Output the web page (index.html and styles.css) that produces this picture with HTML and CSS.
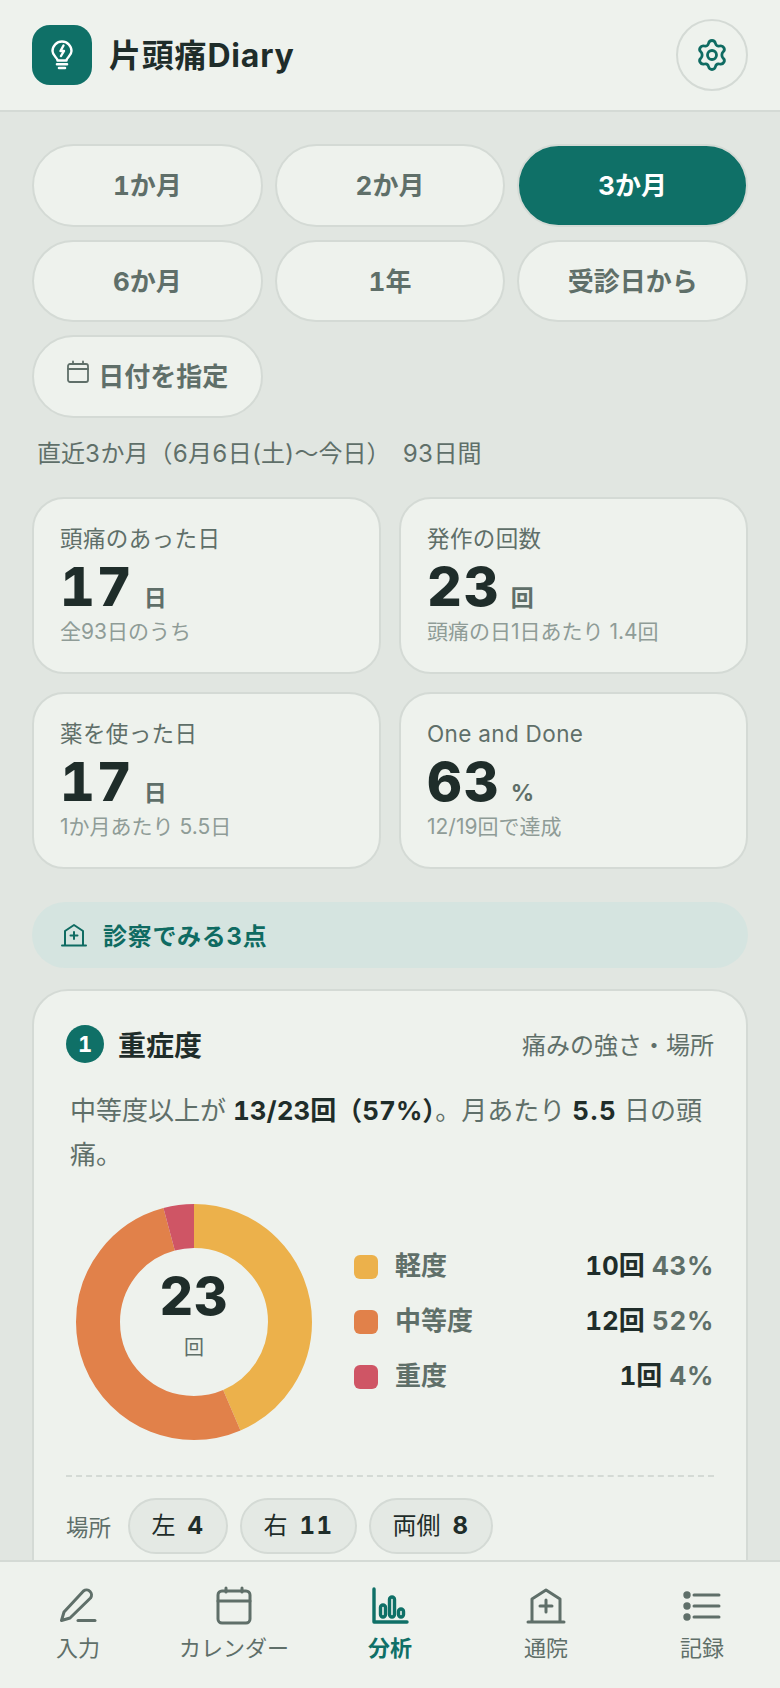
FILE: index.html
```html
<!DOCTYPE html>
<html lang="ja">
<head>
    <meta charset="UTF-8">
    <meta name="viewport" content="width=device-width, initial-scale=1.0">
    <title>片頭痛Diary</title>
    <link rel="stylesheet" href="styles.css">
</head>
<body>
    <!-- ヘッダー -->
    <header class="app-header">
        <div class="brand">
            <div class="brand-logo">
                <svg viewBox="0 0 32 32" width="32" height="32" fill="none" stroke="#fff" stroke-width="2.400" stroke-linecap="round" stroke-linejoin="round">
                    <path d="M11.500 21.500c0-3-5-4.500-5-9.500a9.500 9.500 0 0 1 19 0c0 5-5 6.500-5 9.500z"/>
                    <path d="M17.500 6.500l-3 5.500h3.500l-3 5"/>
                    <path d="M11 25.200h10M13 29h6" stroke-width="2.600"/>
                </svg>
            </div>
            <span class="brand-name">片頭痛Diary</span>
        </div>
        <button class="settings-btn" type="button" aria-label="設定">
            <svg viewBox="0 0 32 36" width="32" height="36" fill="none" stroke="#0f6b62" stroke-width="2.800" stroke-linecap="round" stroke-linejoin="round">
                <path d="M12.500 6.500C13.500 2.500 18.500 2.500 19.500 6.500C20 8.500 21.500 9.500 23.500 9C27.500 8 30 12.500 27 15C25.500 16.500 25.500 19.500 27 21C30 23.500 27.500 28 23.500 27C21.500 26.500 20 27.500 19.500 29.500C18.500 33.500 13.500 33.500 12.500 29.500C12 27.500 10.500 26.500 8.500 27C4.500 28 2 23.500 5 21C6.500 19.500 6.500 16.500 5 15C2 12.500 4.500 8 8.500 9C10.500 9.500 12 8.500 12.500 6.500Z"/>
                <circle cx="16" cy="18" r="4.500"/>
            </svg>
        </button>
    </header>

    <main class="content">
        <!-- 期間の切り替え -->
        <div class="range-grid">
            <button class="range-pill" type="button"><span>1か月</span></button>
            <button class="range-pill" type="button"><span>2か月</span></button>
            <button class="range-pill active" type="button"><span>3か月</span></button>
            <button class="range-pill" type="button"><span>6か月</span></button>
            <button class="range-pill" type="button"><span>1年</span></button>
            <button class="range-pill" type="button"><span>受診日から</span></button>
            <button class="range-pill with-icon" type="button">
                <svg viewBox="0 0 24 24" width="24" height="24" fill="none" stroke="#5f6f69" stroke-width="1.800" stroke-linecap="round" stroke-linejoin="round">
                    <rect x="2" y="4" width="20" height="18" rx="2"/>
                    <path d="M7 1.500V4M17 1.500V4M2 9h20"/>
                </svg>
                <span>日付を指定</span>
            </button>
        </div>
        <p class="range-note">直近3か月（6月6日(土)〜今日）　93日間</p>

        <!-- 集計カード -->
        <section class="stat-grid">
            <div class="stat-card">
                <div class="stat-label">頭痛のあった日</div>
                <div class="stat-value"><strong>17</strong><span>日</span></div>
                <div class="stat-sub">全93日のうち</div>
            </div>
            <div class="stat-card">
                <div class="stat-label">発作の回数</div>
                <div class="stat-value"><strong>23</strong><span>回</span></div>
                <div class="stat-sub">頭痛の日1日あたり 1.4回</div>
            </div>
            <div class="stat-card">
                <div class="stat-label">薬を使った日</div>
                <div class="stat-value"><strong>17</strong><span>日</span></div>
                <div class="stat-sub">1か月あたり 5.5日</div>
            </div>
            <div class="stat-card">
                <div class="stat-label">One and Done</div>
                <div class="stat-value"><strong>63</strong><span>%</span></div>
                <div class="stat-sub">12/19回で達成</div>
            </div>
        </section>

        <div class="visit-banner">
            <svg viewBox="0 0 26 24" width="26" height="24" fill="none" stroke="#0f6b62" stroke-width="2" stroke-linecap="round" stroke-linejoin="round">
                <path d="M4 22V8l9-6 9 6v14"/>
                <path d="M1 22.500h24"/>
                <path d="M13 9v7M9.500 12.500h7"/>
            </svg>
            <span>診察でみる3点</span>
        </div>

        <!-- 重症度カード -->
        <section class="detail-card">
            <div class="detail-head">
                <span class="step-badge">1</span>
                <h2>重症度</h2>
                <span class="detail-hint">痛みの強さ・場所</span>
            </div>
            <p class="detail-text">中等度以上が <b>13/23回（57%）</b>。月あたり <b class="rate">5.5</b> 日の頭<br>痛。</p>

            <div class="severity">
                <div class="donut">
                    <svg viewBox="0 0 236 236" width="236" height="236" fill="none" stroke-width="44">
                        <g transform="rotate(-90 118 118)">
                            <circle cx="118" cy="118" r="96" stroke="#ecb14b" stroke-dasharray="262.26 603.19"/>
                            <circle cx="118" cy="118" r="96" stroke="#e1814a" stroke-dasharray="314.71 603.19" stroke-dashoffset="-262.26"/>
                            <circle cx="118" cy="118" r="96" stroke="#cf5565" stroke-dasharray="26.22 603.19" stroke-dashoffset="-576.97"/>
                        </g>
                    </svg>
                    <div class="donut-center">
                        <strong>23</strong>
                        <span>回</span>
                    </div>
                </div>
                <ul class="legend">
                    <li><i class="swatch mild"></i><span class="legend-name">軽度</span><b>10回</b><span class="legend-pct">43%</span></li>
                    <li><i class="swatch medium"></i><span class="legend-name">中等度</span><b>12回</b><span class="legend-pct">52%</span></li>
                    <li><i class="swatch severe"></i><span class="legend-name">重度</span><b>1回</b><span class="legend-pct">4%</span></li>
                </ul>
            </div>

            <div class="place-row">
                <span class="place-label">場所</span>
                <span class="place-chip">左<b>4</b></span>
                <span class="place-chip">右<b>11</b></span>
                <span class="place-chip">両側<b>8</b></span>
            </div>
        </section>
    </main>

    <!-- 下部ナビ -->
    <nav class="tab-bar">
        <a class="tab" href="#">
            <svg viewBox="0 0 40 40" width="40" height="40" fill="none" stroke="currentColor" stroke-width="3" stroke-linecap="round" stroke-linejoin="round">
                <path d="M3.500 34.500L6 26L25.500 5a5 5 0 0 1 7 7L12 32z"/>
                <path d="M20 34.500h17"/>
            </svg>
            <span>入力</span>
        </a>
        <a class="tab" href="#">
            <svg viewBox="0 0 40 40" width="40" height="40" fill="none" stroke="currentColor" stroke-width="3" stroke-linecap="round" stroke-linejoin="round">
                <rect x="4" y="5" width="32" height="32" rx="4"/>
                <path d="M12 2v4M28 2v4M4 15h32"/>
            </svg>
            <span>カレンダー</span>
        </a>
        <a class="tab current" href="#">
            <svg viewBox="0 0 40 40" width="40" height="40" fill="none" stroke="currentColor" stroke-width="3.400" stroke-linecap="round" stroke-linejoin="round">
                <path d="M4 3v33h33"/>
                <rect x="10.500" y="19" width="5" height="12" rx="2.500"/>
                <rect x="19.500" y="11" width="5" height="20" rx="2.500"/>
                <rect x="28.500" y="23" width="5" height="8" rx="2.500"/>
            </svg>
            <span>分析</span>
        </a>
        <a class="tab" href="#">
            <svg viewBox="0 0 40 40" width="40" height="40" fill="none" stroke="currentColor" stroke-width="3" stroke-linecap="round" stroke-linejoin="round">
                <path d="M6 35V13L20 4l14 9v22"/>
                <path d="M2 36h36"/>
                <path d="M20 14v12M14 20h12"/>
            </svg>
            <span>通院</span>
        </a>
        <a class="tab" href="#">
            <svg viewBox="0 0 40 40" width="40" height="40" fill="none" stroke="currentColor" stroke-width="3" stroke-linecap="round">
                <path d="M12 9h25M12 20h25M12 31h25"/>
                <circle cx="5" cy="9" r="2.200" fill="currentColor"/>
                <circle cx="5" cy="20" r="2.200" fill="currentColor"/>
                <circle cx="5" cy="31" r="2.200" fill="currentColor"/>
            </svg>
            <span>記録</span>
        </a>
    </nav>
</body>
</html>
```

FILE: styles.css
```css
/* 全体 */
html, body {
    margin: 0;
    padding: 0;
    width: 780px;
    height: 1688px;
    overflow: hidden;
}

body {
    display: flex;
    flex-direction: column;
    background: #e1e6e1;
    color: #1f2d2a;
    font-family: Inter, "Noto Sans CJK JP", sans-serif;
    font-variant-numeric: tabular-nums;
}

button {
    font-family: inherit;
    font-variant-numeric: inherit;
    cursor: pointer;
}

/* ヘッダー */
.app-header {
    flex: none;
    height: 110px;
    display: flex;
    align-items: center;
    justify-content: space-between;
    padding: 0 32px;
    background: #eef2ed;
    border-bottom: 2px solid #d4dad5;
}

.brand {
    display: flex;
    align-items: center;
    gap: 17px;
}

.brand-logo {
    width: 60px;
    height: 60px;
    display: flex;
    align-items: center;
    justify-content: center;
    border-radius: 18px;
    background: #0f7067;
}

.brand-name {
    margin-bottom: 4px;
    font-size: 32px;
    font-weight: 700;
    letter-spacing: 0.8px;
}

.settings-btn {
    width: 72px;
    height: 72px;
    display: flex;
    align-items: center;
    justify-content: center;
    padding: 0;
    border: 2px solid #d4dad5;
    border-radius: 50%;
    background: #eef2ed;
}

/* メイン */
.content {
    flex: 1;
    min-height: 0;
    overflow: hidden;
    padding: 32px 32px 0;
}

/* 期間ボタン */
.range-grid {
    display: grid;
    grid-template-columns: repeat(3, 1fr);
    gap: 13px 12px;
}

.range-pill {
    height: 82.5px;
    padding: 0 0 3px;
    border: 2px solid #d4dad5;
    border-radius: 42px;
    background: #eef2ed;
    color: #5f6f69;
    font-size: 26px;
    font-weight: 700;
}

.range-pill.active {
    background: #0f7067;
    color: #fff;
}

.range-pill.with-icon {
    display: flex;
    align-items: center;
    justify-content: center;
    gap: 8px;
}

.range-pill.with-icon svg {
    margin-bottom: 6px;
}

.range-note {
    margin: 18px 0 25px;
    padding-left: 5px;
    font-size: 24px;
    line-height: 36px;
    color: #5f6f69;
}

/* 集計カード */
.stat-grid {
    display: grid;
    grid-template-columns: repeat(2, 1fr);
    gap: 18px;
}

.stat-card {
    height: 177px;
    box-sizing: border-box;
    padding: 25px 26px 0;
    border: 2px solid #d4dad5;
    border-radius: 32px;
    background: #eef2ed;
}

.stat-label {
    font-size: 22.500px;
    line-height: 30px;
    letter-spacing: 0.4px;
    color: #5f6f69;
}

.stat-value {
    display: flex;
    align-items: baseline;
    gap: 10px;
    height: 60px;
    margin-top: 3px;
    line-height: 60px;
}

.stat-value strong {
    font-size: 54px;
    font-weight: 800;
    letter-spacing: 2px;
}

.stat-value span {
    font-size: 23px;
    font-weight: 700;
    color: #5f6f69;
}

.stat-sub {
    margin-top: 1px;
    font-size: 21px;
    font-variant-numeric: normal;
    line-height: 28px;
    color: #8f9c97;
}

/* 診察バナー */
.visit-banner {
    height: 66px;
    display: flex;
    align-items: center;
    gap: 16px;
    margin-top: 33px;
    padding-left: 29px;
    border-radius: 33px;
    background: #d5e4e0;
    color: #0f6b62;
    font-size: 24px;
    font-weight: 700;
    letter-spacing: 0.7px;
}

/* 重症度カード */
.detail-card {
    margin-top: 21px;
    padding: 33px 32px 60px;
    border: 2px solid #d4dad5;
    border-radius: 36px;
    background: #eef2ed;
}

.detail-head {
    display: flex;
    align-items: center;
}

.step-badge {
    width: 38px;
    height: 38px;
    display: flex;
    align-items: center;
    justify-content: center;
    border-radius: 50%;
    background: #0f7067;
    color: #fff;
    font-size: 22px;
    font-weight: 700;
}

.detail-head h2 {
    margin: 0 0 0 14px;
    font-size: 28px;
    font-weight: 700;
}

.detail-hint {
    margin-left: auto;
    font-size: 24px;
    color: #5f6f69;
}

.detail-text {
    margin: 25px 0 27px;
    padding: 0 4px;
    font-size: 26px;
    line-height: 44px;
    color: #5f6f69;
}

.detail-text b {
    color: #1f2d2a;
}

.detail-text .rate {
    letter-spacing: 1.4px;
}

/* ドーナツとその凡例 */
.severity {
    display: flex;
    align-items: center;
    gap: 42px;
    padding-left: 10px;
    padding-bottom: 35px;
    border-bottom: 2px dashed #d4dad5;
}

.donut {
    display: grid;
    flex: none;
}

.donut svg,
.donut-center {
    grid-area: 1 / 1;
}

.donut svg {
    display: block;
}

.donut-center {
    display: flex;
    flex-direction: column;
    align-items: center;
    justify-content: center;
    padding-bottom: 16px;
}

.donut-center strong {
    font-size: 52px;
    font-weight: 800;
    letter-spacing: 1px;
    line-height: 60px;
}

.donut-center span {
    margin-top: 8px;
    font-size: 20px;
    line-height: 26px;
    color: #5f6f69;
}

.legend {
    flex: 1;
    margin: 0;
    padding: 0;
    list-style: none;
}

.legend li {
    height: 55px;
    display: flex;
    align-items: baseline;
    font-size: 26px;
    line-height: 54px;
}

.swatch {
    align-self: center;
    width: 24px;
    height: 24px;
    margin-right: 17px;
    border-radius: 6px;
}

.swatch.mild { background: #ecb14b; }
.swatch.medium { background: #e1814a; }
.swatch.severe { background: #cf5565; }

.legend-name {
    margin-right: auto;
    font-weight: 700;
    color: #5f6f69;
}

.legend-pct {
    margin-left: 7px;
    font-weight: 700;
    letter-spacing: 0.7px;
    color: #5f6f69;
}

/* 場所 */
.place-row {
    display: flex;
    align-items: center;
    gap: 12px;
    margin-top: 21px;
}

.place-label {
    margin-right: 5px;
    font-size: 22.500px;
    color: #5f6f69;
}

.place-chip {
    height: 56px;
    box-sizing: border-box;
    display: flex;
    align-items: baseline;
    gap: 12px;
    padding: 0 21.500px;
    border: 2px solid #d4dad5;
    border-radius: 28px;
    background: #e4e9e4;
    font-size: 24px;
    line-height: 52px;
}

.place-chip b {
    letter-spacing: 1.500px;
}

/* 下部ナビ */
.tab-bar {
    flex: none;
    height: 126px;
    display: grid;
    grid-template-columns: repeat(5, 1fr);
    background: #eef2ed;
    border-top: 2px solid #d4dad5;
}

.tab {
    display: flex;
    flex-direction: column;
    align-items: center;
    gap: 7px;
    padding-top: 24px;
    color: #5f6f69;
    font-size: 22px;
    line-height: 30px;
    text-decoration: none;
}

.tab.current {
    color: #0f7067;
    font-weight: 700;
}
```
